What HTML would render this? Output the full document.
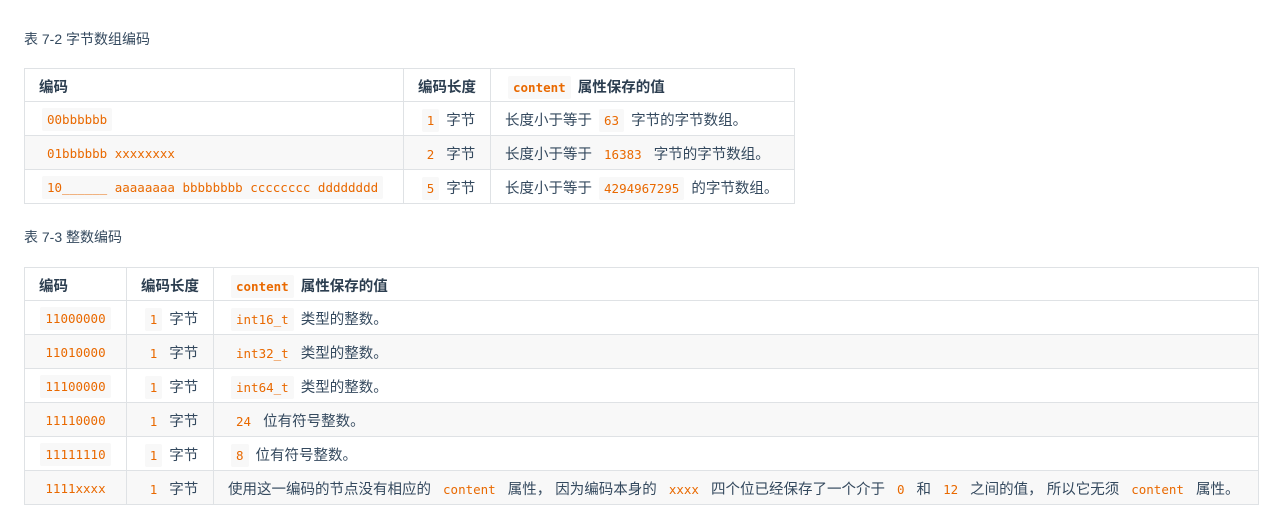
<!DOCTYPE html>
<html><head><meta charset="utf-8"><style>
body{margin:0;background:#fff;font-family:"Liberation Sans","Noto Sans CJK SC",sans-serif;font-size:14.5px;color:#34495e;}
.cap{position:absolute;left:24px;font-size:14px;color:#34495e;}
table{position:absolute;left:24px;border-collapse:collapse;table-layout:fixed;}
td,th{border:1px solid #dfe2e5;height:31px;padding:2px 0 0 14px;white-space:nowrap;text-align:left;}
th{font-weight:bold;color:#2c3e50;height:30px;}
tr:nth-child(odd) td{background:#f8f8f8;}
.c{text-align:center;padding:2px 0 0 0;}
code{font-family:"DejaVu Sans Mono","Liberation Mono",monospace;font-size:12.5px;color:#e96900;background:#f8f8f8;padding:4px 5px;border-radius:2px;margin:0 3px;}
th code{font-weight:bold;}
</style></head><body>
<div class="cap" style="top:29px">表 7-2 字节数组编码</div>
<table style="top:68px;width:770px">
<colgroup><col style="width:379px"><col style="width:87px"><col style="width:304px"></colgroup>
<tr><th>编码</th><th class="c">编码长度</th><th><code>content</code> 属性保存的值</th></tr>
<tr><td><code>00bbbbbb</code></td><td class="c"><code>1</code> 字节</td><td>长度小于等于 <code>63</code> 字节的字节数组。</td></tr>
<tr><td><code>01bbbbbb xxxxxxxx</code></td><td class="c"><code>2</code> 字节</td><td>长度小于等于 <code>16383</code> 字节的字节数组。</td></tr>
<tr><td><code>10______ aaaaaaaa bbbbbbbb cccccccc dddddddd</code></td><td class="c"><code>5</code> 字节</td><td>长度小于等于 <code>4294967295</code> 的字节数组。</td></tr>
</table>
<div class="cap" style="top:227px">表 7-3 整数编码</div>
<table style="top:267px;width:1234px">
<colgroup><col style="width:102px"><col style="width:87px"><col style="width:1045px"></colgroup>
<tr><th>编码</th><th class="c">编码长度</th><th><code>content</code> 属性保存的值</th></tr>
<tr><td class="c"><code>11000000</code></td><td class="c"><code>1</code> 字节</td><td><code>int16_t</code> 类型的整数。</td></tr>
<tr><td class="c"><code>11010000</code></td><td class="c"><code>1</code> 字节</td><td><code>int32_t</code> 类型的整数。</td></tr>
<tr><td class="c"><code>11100000</code></td><td class="c"><code>1</code> 字节</td><td><code>int64_t</code> 类型的整数。</td></tr>
<tr><td class="c"><code>11110000</code></td><td class="c"><code>1</code> 字节</td><td><code>24</code> 位有符号整数。</td></tr>
<tr><td class="c"><code>11111110</code></td><td class="c"><code>1</code> 字节</td><td><code>8</code> 位有符号整数。</td></tr>
<tr><td class="c"><code>1111xxxx</code></td><td class="c"><code>1</code> 字节</td><td>使用这一编码的节点没有相应的 <code>content</code> 属性， 因为编码本身的 <code>xxxx</code> 四个位已经保存了一个介于 <code>0</code> 和 <code>12</code> 之间的值， 所以它无须 <code>content</code> 属性。</td></tr>
</table>
</body></html>
